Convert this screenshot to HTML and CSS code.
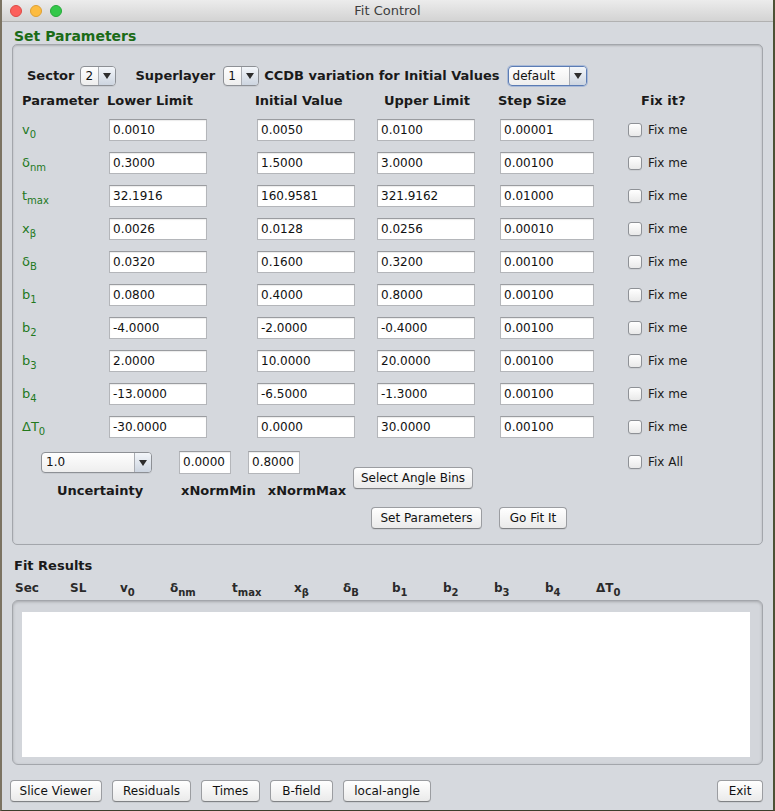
FILE: index.html
```html
<!DOCTYPE html>
<html>
<head>
<meta charset="utf-8">
<title>Fit Control</title>
<link rel="stylesheet" href="styles.css">
</head>
<body>
<div class="window">
  <div class="titlebar">
    <div class="lights">
      <span class="light red"></span>
      <span class="light yellow"></span>
      <span class="light green"></span>
    </div>
    <div class="title">Fit Control</div>
  </div>
  <div class="content">
    <div class="section-title green">Set Parameters</div>
    <div class="panel">
      <div class="sector-row">
        <span class="blabel l-sector">Sector</span>
        <span class="combo c-small"><span class="combo-text">2</span><span class="combo-arrow"><span class="tri"></span></span></span>
        <span class="blabel l-super">Superlayer</span>
        <span class="combo c-small"><span class="combo-text">1</span><span class="combo-arrow"><span class="tri"></span></span></span>
        <span class="blabel l-ccdb">CCDB variation for Initial Values</span>
        <span class="combo c-default focused"><span class="combo-text">default</span><span class="combo-arrow"><span class="tri"></span></span></span>
      </div>

      <div class="param-grid">
        <div class="hdr h-param">Parameter</div>
        <div class="hdr h-lower">Lower Limit</div>
        <div class="hdr h-init">Initial Value</div>
        <div class="hdr h-upper">Upper Limit</div>
        <div class="hdr h-step">Step Size</div>
        <div class="hdr h-fix">Fix it?</div>

        <div class="plabel">v<sub>0</sub></div>
        <div class="field">0.0010</div><div class="field">0.0050</div><div class="field">0.0100</div><div class="field f-step">0.00001</div>
        <div class="check"><span class="box"></span>Fix me</div>

        <div class="plabel">δ<sub>nm</sub></div>
        <div class="field">0.3000</div><div class="field">1.5000</div><div class="field">3.0000</div><div class="field f-step">0.00100</div>
        <div class="check"><span class="box"></span>Fix me</div>

        <div class="plabel">t<sub>max</sub></div>
        <div class="field">32.1916</div><div class="field">160.9581</div><div class="field">321.9162</div><div class="field f-step">0.01000</div>
        <div class="check"><span class="box"></span>Fix me</div>

        <div class="plabel">x<sub>β</sub></div>
        <div class="field">0.0026</div><div class="field">0.0128</div><div class="field">0.0256</div><div class="field f-step">0.00010</div>
        <div class="check"><span class="box"></span>Fix me</div>

        <div class="plabel">δ<sub>B</sub></div>
        <div class="field">0.0320</div><div class="field">0.1600</div><div class="field">0.3200</div><div class="field f-step">0.00100</div>
        <div class="check"><span class="box"></span>Fix me</div>

        <div class="plabel">b<sub>1</sub></div>
        <div class="field">0.0800</div><div class="field">0.4000</div><div class="field">0.8000</div><div class="field f-step">0.00100</div>
        <div class="check"><span class="box"></span>Fix me</div>

        <div class="plabel">b<sub>2</sub></div>
        <div class="field">-4.0000</div><div class="field">-2.0000</div><div class="field">-0.4000</div><div class="field f-step">0.00100</div>
        <div class="check"><span class="box"></span>Fix me</div>

        <div class="plabel">b<sub>3</sub></div>
        <div class="field">2.0000</div><div class="field">10.0000</div><div class="field">20.0000</div><div class="field f-step">0.00100</div>
        <div class="check"><span class="box"></span>Fix me</div>

        <div class="plabel">b<sub>4</sub></div>
        <div class="field">-13.0000</div><div class="field">-6.5000</div><div class="field">-1.3000</div><div class="field f-step">0.00100</div>
        <div class="check"><span class="box"></span>Fix me</div>

        <div class="plabel">ΔT<sub>0</sub></div>
        <div class="field">-30.0000</div><div class="field">0.0000</div><div class="field">30.0000</div><div class="field f-step">0.00100</div>
        <div class="check"><span class="box"></span>Fix me</div>
      </div>

      <div class="extras">
        <div class="ex-unc">
          <span class="combo c-unc"><span class="combo-text">1.0</span><span class="combo-arrow"><span class="tri"></span></span></span>
          <div class="blabel unc-label">Uncertainty</div>
        </div>
        <div class="ex-norm">
          <div class="norm-fields">
            <div class="field f-norm">0.0000</div>
            <div class="field f-norm">0.8000</div>
          </div>
          <div class="norm-labels">
            <span class="blabel">xNormMin</span>
            <span class="blabel">xNormMax</span>
          </div>
        </div>
        <div class="ex-buttons">
          <div class="btn b-angle">Select Angle Bins</div>
          <div class="btn-row">
            <div class="btn b-setp">Set Parameters</div>
            <div class="btn b-go">Go Fit It</div>
          </div>
        </div>
        <div class="ex-fixall">
          <div class="check"><span class="box"></span>Fix All</div>
        </div>
      </div>
    </div>

    <div class="section-title results-title">Fit Results</div>
    <div class="res-header">
      <span>Sec</span><span>SL</span><span>v<sub>0</sub></span><span>δ<sub>nm</sub></span><span>t<sub>max</sub></span><span>x<sub>β</sub></span><span>δ<sub>B</sub></span><span>b<sub>1</sub></span><span>b<sub>2</sub></span><span>b<sub>3</sub></span><span>b<sub>4</sub></span><span>ΔT<sub>0</sub></span>
    </div>
    <div class="res-box">
      <div class="res-inner"></div>
    </div>

    <div class="bottom-bar">
      <div class="btn b-slice">Slice Viewer</div>
      <div class="btn b-resid">Residuals</div>
      <div class="btn b-times">Times</div>
      <div class="btn b-bfield">B-field</div>
      <div class="btn b-local">local-angle</div>
      <div class="spacer"></div>
      <div class="btn b-exit">Exit</div>
    </div>
  </div>
</div>
</body>
</html>
```

FILE: styles.css
```css
* { box-sizing: border-box; }
html, body { margin: 0; padding: 0; }
body {
  background: #6f6a52;
  font-family: "DejaVu Sans", "Liberation Sans", sans-serif;
  font-size: 12px;
  color: #1a1a1a;
}
.window {
  width: 775px;
  height: 811px;
  border-left: 2px solid #7b7362;
  border-right: 2px solid #4d5235;
  border-bottom: 1px solid #3d3f2c;
  background: #d6d9de;
  overflow: hidden;
}
.titlebar {
  height: 22px;
  background: linear-gradient(#ececec, #d3d3d3);
  border-bottom: 1px solid #b1b1b1;
  display: flex;
  align-items: center;
}
.lights {
  display: flex;
  gap: 8px;
  padding-left: 8px;
}
.light {
  width: 12px;
  height: 12px;
  border-radius: 50%;
  display: block;
}
.light.red { background: #fc605c; border: 1px solid #de4a45; }
.light.yellow { background: #fdbc40; border: 1px solid #dea033; }
.light.green { background: #34c84a; border: 1px solid #27a93a; }
.title {
  flex: 1;
  text-align: center;
  font-size: 13px;
  color: #3d3d3d;
  margin-right: 60px;
}
.content {
  padding: 7px 10px 0 10px;
}
.section-title {
  font-weight: bold;
  font-size: 14px;
  line-height: 15px;
  height: 15px;
  padding-left: 2px;
}
.green { color: #1b6b17; }
.panel {
  height: 501px;
  border: 1px solid #a3a6ab;
  border-radius: 5px;
  background: #d5d8dd;
  box-shadow: inset 0 1px 2px rgba(0,0,0,0.18);
  padding: 20px 0 0 9px;
}
.blabel {
  font-weight: bold;
  font-size: 13px;
  color: #1a1a1a;
}
.sector-row {
  display: flex;
  align-items: center;
  height: 21px;
}
.l-sector { margin-left: 5px; margin-right: 6px; }
.l-super { margin-left: 19px; margin-right: 8px; }
.l-ccdb { margin-left: 5px; margin-right: 8px; }

.combo {
  display: inline-flex;
  height: 20px;
  border: 1px solid #8d9095;
  border-radius: 4px;
  background: linear-gradient(#fefefe, #eeeeee);
  box-shadow: 0 1px 0 rgba(0,0,0,0.06);
  overflow: hidden;
  font-size: 12px;
}
.combo-text {
  flex: 1;
  padding-left: 4px;
  line-height: 18px;
  color: #111;
}
.combo-arrow {
  width: 17px;
  border-left: 1px solid #a9acb2;
  background: linear-gradient(#f3f6fa, #cdd5e0);
  display: flex;
  align-items: center;
  justify-content: center;
}
.tri {
  width: 0;
  height: 0;
  border-left: 4px solid transparent;
  border-right: 4px solid transparent;
  border-top: 6px solid #2d2d2d;
}
.c-small { width: 36px; }
.c-default { width: 79px; }
.focused {
  border-color: #5b7cb4;
  box-shadow: 0 0 0 1px rgba(115,150,210,0.45);
}
.c-unc { width: 111px; height: 21px; }

.param-grid {
  margin-top: 8px;
  display: grid;
  grid-template-columns: 87px 148px 120px 123px 128px 1fr;
  grid-template-rows: 14px;
  grid-auto-rows: 22px;
  row-gap: 11px;
  align-items: center;
}
.param-grid .hdr {
  font-weight: bold;
  font-size: 13px;
  height: 14px;
  line-height: 14px;
  white-space: nowrap;
}
.h-lower { margin-left: -2px; }
.h-init { margin-left: -2px; }
.h-upper { margin-left: 7px; }
.h-step { margin-left: -2px; }
.h-fix { margin-left: 13px; }

.plabel {
  color: #23791d;
  font-size: 13px;
  line-height: 16px;
}
.plabel sub, .res-header sub {
  font-size: 10px;
  vertical-align: -4px;
  line-height: 0;
}
.field {
  width: 98px;
  height: 22px;
  background: #fff;
  border: 1px solid #b4b6ba;
  border-top-color: #9a9ca0;
  box-shadow: inset 0 1px 1px rgba(0,0,0,0.08);
  padding-left: 3px;
  line-height: 20px;
  font-size: 12px;
  color: #111;
  white-space: nowrap;
}
.f-step { width: 94px; }
.check {
  display: flex;
  align-items: center;
  font-size: 12px;
  color: #1a1a1a;
}
.check .box {
  width: 14px;
  height: 14px;
  border: 1px solid #8e9196;
  border-radius: 3px;
  background: linear-gradient(#ffffff, #e9e9e9);
  margin-right: 6px;
  box-shadow: 0 1px 0 rgba(0,0,0,0.05);
}

.extras {
  margin-top: 14px;
  display: flex;
  align-items: flex-start;
  height: 78px;
}
.ex-unc {
  margin-left: 19px;
  width: 138px;
  display: flex;
  flex-direction: column;
}
.unc-label { margin-top: 10px; margin-left: 16px; }
.ex-norm {
  width: 174px;
  display: flex;
  flex-direction: column;
}
.norm-fields {
  display: flex;
  gap: 17px;
  margin-top: -1px;
}
.f-norm { width: 52px; height: 23px; }
.norm-labels {
  display: flex;
  gap: 12px;
  margin-top: 9px;
  padding-left: 2px;
}
.ex-buttons {
  width: 275px;
  display: flex;
  flex-direction: column;
  padding-top: 15px;
}
.btn-row {
  display: flex;
  gap: 17px;
  margin-top: 18px;
  padding-left: 18px;
}
.btn {
  height: 22px;
  line-height: 20px;
  border: 1px solid #9b9da1;
  border-bottom-color: #808285;
  border-radius: 4px;
  background: linear-gradient(#ffffff, #eaeaea);
  box-shadow: 0 1px 0 rgba(0,0,0,0.06);
  font-size: 12px;
  color: #111;
  text-align: center;
  white-space: nowrap;
}
.b-angle { width: 120px; }
.b-setp { width: 111px; }
.b-go { width: 68px; }
.ex-fixall { padding-top: 3px; }

.results-title {
  margin-top: 13px;
  color: #1a1a1a;
  font-size: 13px;
  height: 16px;
  line-height: 16px;
}
.res-header {
  margin-top: 6px;
  height: 16px;
  line-height: 16px;
  display: grid;
  grid-template-columns: 55px 50px 50px 62px 62px 49px 49px 51px 51px 51px 51px auto;
  padding-left: 3px;
  font-weight: bold;
  font-size: 12px;
  color: #2a2a2a;
}
.res-box {
  margin-top: 4px;
  height: 165px;
  border: 1px solid #a3a6ab;
  border-radius: 6px;
  background: #d3d6db;
  box-shadow: inset 0 1px 3px rgba(0,0,0,0.22);
  padding: 11px 12px 7px 9px;
}
.res-inner {
  background: #ffffff;
  height: 100%;
}
.bottom-bar {
  margin-top: 15px;
  margin-left: -2px;
  display: flex;
  gap: 10px;
}
.spacer { flex: 1; }
.b-slice { width: 92px; }
.b-resid { width: 79px; }
.b-times { width: 59px; }
.b-bfield { width: 63px; }
.b-local { width: 88px; }
.b-exit { width: 46px; }
```
